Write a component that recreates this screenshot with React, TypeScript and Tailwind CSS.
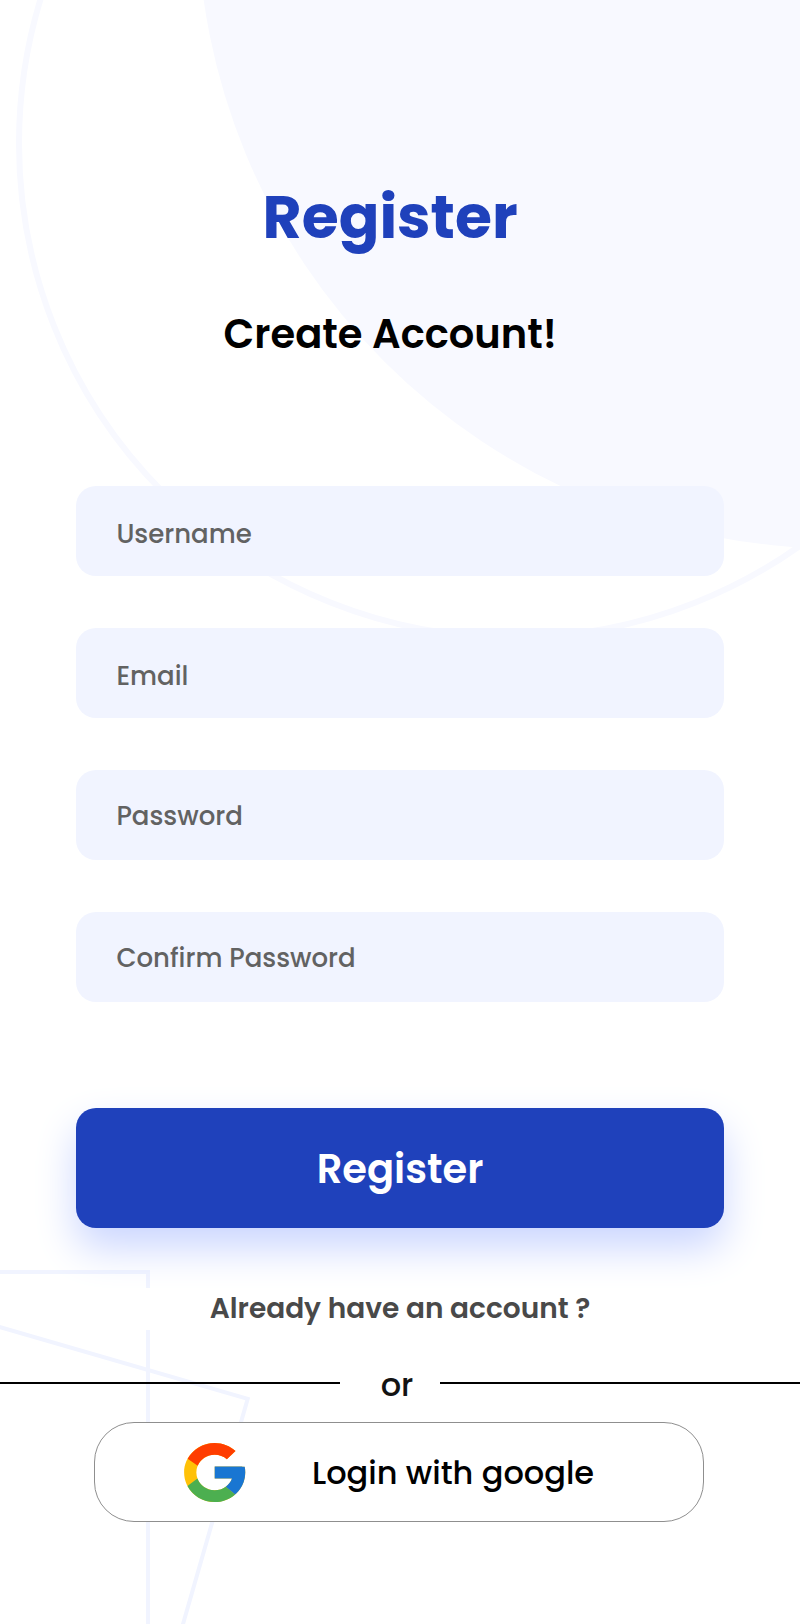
import React from "react";

type Field = { label: string; text: string };

const fields: Field[] = [
  { label: "Username", text: "pt-[6px]" },
  { label: "Email", text: "pt-[6px]" },
  { label: "Password", text: "pt-[2px]" },
  { label: "Confirm Password", text: "pt-[2px]" },
];

function Backdrop() {
  return (
    <svg
      className="pointer-events-none absolute inset-0 h-[1624px] w-[800px]"
      viewBox="0 0 800 1624"
      fill="none"
      aria-hidden="true"
    >
      <circle cx="513" cy="143.5" r="494" stroke="#f8f9ff" strokeWidth="6" />
      <circle cx="835.5" cy="-89.9" r="638.2" fill="#f8f9ff" />
      <path d="M-10 1272H148V1634" stroke="#f1f4ff" strokeWidth="4" />
      <path d="M-20 1321.4L247.7 1398.8L180 1634.5" stroke="#f1f4ff" strokeWidth="4" />
    </svg>
  );
}

function GoogleLogo() {
  return (
    <svg className="h-[71px] w-[73.4px] shrink-0" viewBox="0 0 48 48" preserveAspectRatio="none" aria-hidden="true">
      <path
        fill="#FFC107"
        d="M43.611 20.083H42V20H24v8h11.303c-1.649 4.657-6.08 8-11.303 8-6.627 0-12-5.373-12-12s5.373-12 12-12c3.059 0 5.842 1.154 7.961 3.039l5.657-5.657C34.046 6.053 29.268 4 24 4 12.955 4 4 12.955 4 24s8.955 20 20 20 20-8.955 20-20c0-1.341-.138-2.65-.389-3.917z"
      />
      <path
        fill="#FF3D00"
        d="M6.306 14.691l6.571 4.819C14.655 15.108 18.961 12 24 12c3.059 0 5.842 1.154 7.961 3.039l5.657-5.657C34.046 6.053 29.268 4 24 4 16.318 4 9.656 8.337 6.306 14.691z"
      />
      <path
        fill="#4CAF50"
        d="M24 44c5.166 0 9.86-1.977 13.409-5.192l-6.19-5.238C29.211 35.091 26.715 36 24 36c-5.202 0-9.619-3.317-11.283-7.946l-6.522 5.025C9.505 39.556 16.227 44 24 44z"
      />
      <path
        fill="#1976D2"
        d="M43.611 20.083H42V20H24v8h11.303c-.792 2.237-2.231 4.166-4.087 5.571l6.193 5.238C36.971 39.205 44 34 44 24c0-1.341-.138-2.65-.389-3.917z"
      />
    </svg>
  );
}

export default function App() {
  return (
    <div className="relative h-[1624px] w-[800px] overflow-hidden bg-white font-['Poppins','Inter',sans-serif] text-black whitespace-nowrap">
      <Backdrop />
      <main className="relative flex flex-col pt-[172px]">
        <header className="flex flex-col items-start">
          <h1 className="ml-[262.6px] text-[60px] leading-[90px] font-bold text-[#1f41bb]">Register</h1>
          <h2 className="mt-[42px] ml-[223.6px] text-[40px] leading-[60px] font-semibold">Create Account!</h2>
        </header>

        <form className="mt-[122px] flex flex-col px-[76px]" onSubmit={(e) => e.preventDefault()}>
          <div className="flex flex-col gap-[52px]">
            {fields.map((f) => (
              <label
                key={f.label}
                className="flex h-[90px] items-center rounded-[20px] bg-[#f1f4ff] pl-[40.4px] text-[26px] leading-[39px] font-medium text-[#626262]"
              >
                <span className={f.text}>{f.label}</span>
              </label>
            ))}
          </div>
          <button
            type="submit"
            className="mt-[106px] h-[120px] rounded-[20px] bg-[#1f41bb] pt-[1px] text-[40px] leading-[60px] font-semibold text-white shadow-[0_20px_40px_#cbd6ff]"
          >
            Register
          </button>
          <a className="mt-[60px] block h-[42px] bg-white text-center text-[28px] leading-[42px] font-semibold text-[#494949]">
            Already have an account ?
          </a>
        </form>

        <div className="mt-[28px] flex h-[48px] items-center">
          <span className="mt-[2px] h-[2px] w-[340px] bg-black" />
          <span className="w-[100px] pt-[6px] pl-[14px] text-center text-[32px] leading-[48px] font-medium text-[#131313]">or</span>
          <span className="mt-[2px] h-[2px] flex-1 bg-black" />
        </div>

        <button
          type="button"
          className="mt-[16px] ml-[94px] flex h-[100px] w-[610px] items-center rounded-[40px] border border-[#8f8f8f] bg-white pl-[83px]"
        >
          <GoogleLogo />
          <span className="ml-[60.6px] pt-[2px] text-[32px] leading-[48px] font-medium">Login with google</span>
        </button>
      </main>
    </div>
  );
}
